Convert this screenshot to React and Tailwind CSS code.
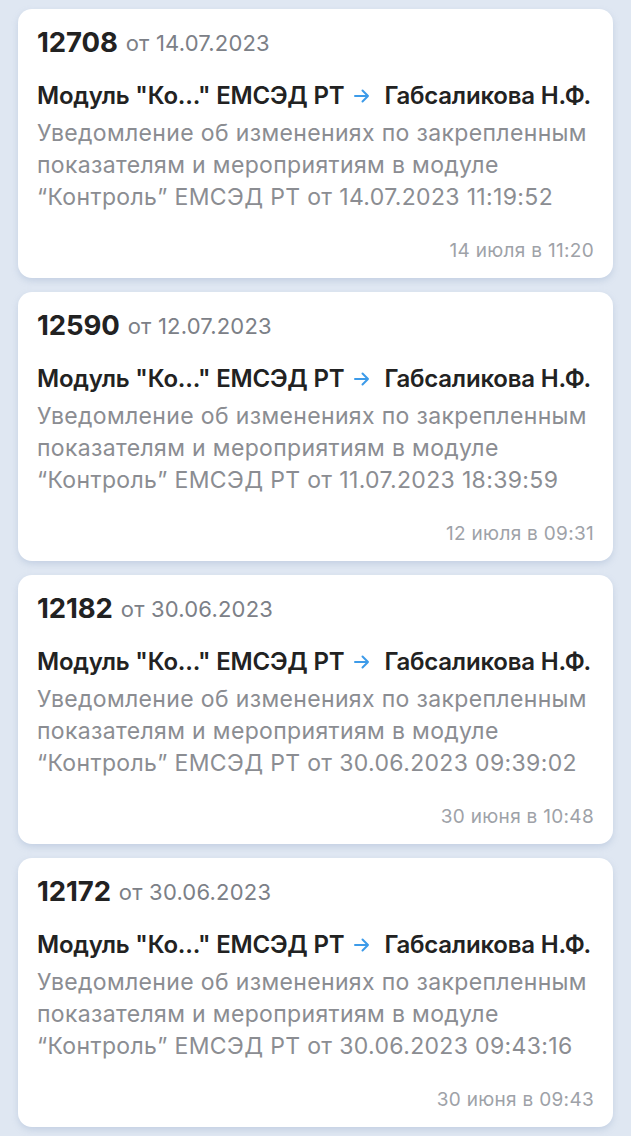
const items = [
  { id: "12708", date: "14.07.2023", ts: "14.07.2023 11:19:52", when: "14 июля в 11:20" },
  { id: "12590", date: "12.07.2023", ts: "11.07.2023 18:39:59", when: "12 июля в 09:31" },
  { id: "12182", date: "30.06.2023", ts: "30.06.2023 09:39:02", when: "30 июня в 10:48" },
  { id: "12172", date: "30.06.2023", ts: "30.06.2023 09:43:16", when: "30 июня в 09:43" },
];

function Arrow() {
  return (
    <svg width="16" height="14" viewBox="0 0 16 14" className="shrink-0 block ml-[10px] mr-[14px]">
      <path d="M1 7h13M8.5 1.5L14 7l-5.5 5.5" fill="none" stroke="#3d9be9" strokeWidth="2" strokeLinecap="round" strokeLinejoin="round" />
    </svg>
  );
}

export default function App() {
  return (
    <div
      className="min-h-[1136px] bg-[#dfe7f2] px-[18px] pt-[9px] pb-[9px] flex flex-col gap-[14px]"
      style={{ fontFamily: "Inter, 'Noto Sans', sans-serif" }}
    >
      {items.map((it) => (
        <div
          key={it.id}
          className="bg-white rounded-[14px] h-[269px] px-[19px] pt-[15px] pb-[15px] flex flex-col shadow-[0_3px_6px_rgba(150,170,200,0.35)]"
        >
          <div className="h-[38px] flex items-center whitespace-nowrap">
            <span className="text-[27.5px] font-bold text-[#222] tracking-[-0.1px]">{it.id}</span>
            <span className="text-[22px] text-[#7c8087] ml-[8px] tracking-[0.2px]">{`от ${it.date}`}</span>
          </div>
          <div className="mt-[17px] text-[24px] font-semibold text-[#222] leading-[34px] whitespace-nowrap tracking-[-0.2px] flex items-center">
            <span>Модуль "Ко..." ЕМСЭД РТ</span>
            <Arrow />
            <span>Габсаликова Н.Ф.</span>
          </div>
          <p className="mt-[4px] text-[23px] leading-[32px] text-[#8b8d92] tracking-[0.35px]">
            {`Уведомление об изменениях по закрепленным показателям и мероприятиям в модуле “Контроль” ЕМСЭД РТ от ${it.ts}`}
          </p>
          <div className="mt-auto text-right text-[19px] leading-[24px] text-[#9ea2a8] tracking-[0.3px]">{it.when}</div>
        </div>
      ))}
    </div>
  );
}
